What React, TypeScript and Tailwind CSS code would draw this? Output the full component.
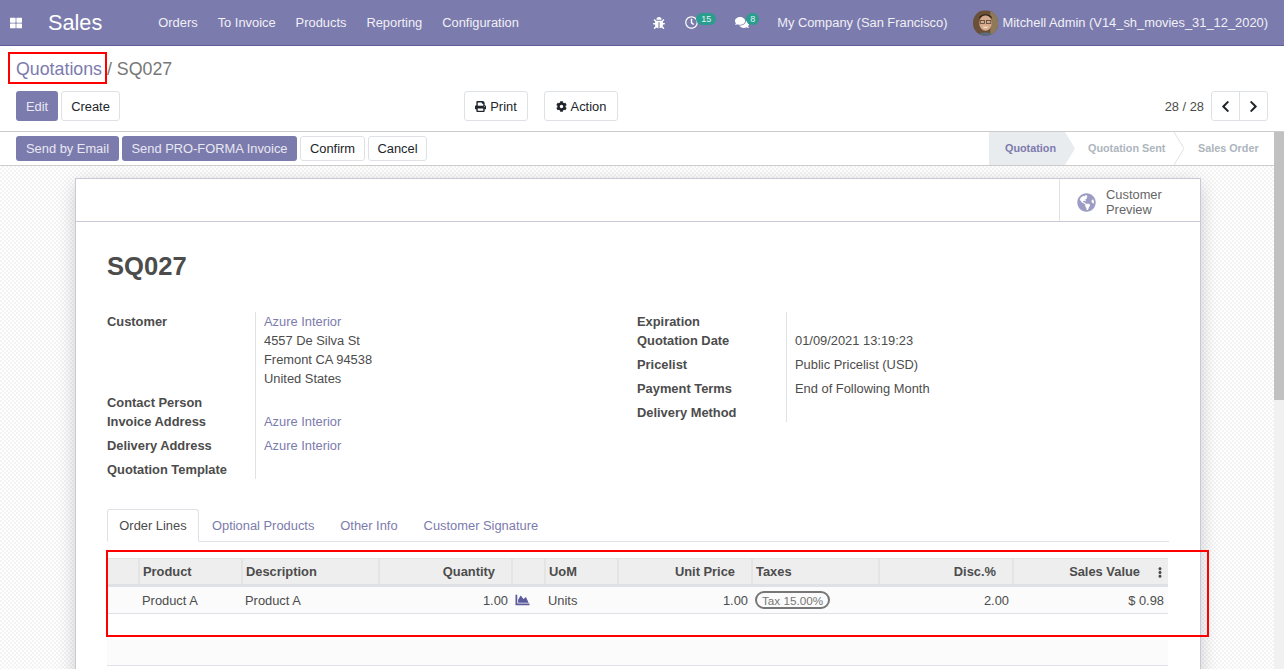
import { FaBug, FaChartArea, FaChevronLeft, FaChevronRight, FaCog, FaComments, FaEllipsisV, FaGlobeAmericas, FaPrint, FaRegClock, FaThLarge } from 'react-icons/fa';

const navLinks = ['Orders', 'To Invoice', 'Products', 'Reporting', 'Configuration'];

function Navbar() {
  return (
    <header className="h-[46px] shrink-0 flex items-center bg-[#7c7bad] border-b border-[#5f5e97] text-[#f0f0f6]">
      <FaThLarge className="ml-[10px] w-[12px] h-[12px] text-white" />
      <span className="ml-[26px] text-[21.7px] leading-none text-white">Sales</span>
      <nav className="ml-[56px] flex gap-[20px]">
        {navLinks.map((l) => (
          <span key={l}>{l}</span>
        ))}
      </nav>
      <div className="ml-auto flex items-center pr-[16px]">
        <FaBug className="w-[12px] h-[12px] text-white" />
        <span className="relative flex ml-[20px] w-[14px]">
          <FaRegClock className="w-[13px] h-[13px] text-white" />
          <span className="absolute left-[11px] -top-[3px] w-[20px] h-[12px] rounded-full bg-[#2a9d8f] text-[9px] leading-[12px] text-center text-[#e4f4f2]">15</span>
        </span>
        <span className="relative flex ml-[36px] w-[14px]">
          <FaComments className="w-[15px] h-[13px] text-white" />
          <span className="absolute left-[11px] -top-[3px] w-[13px] h-[12px] rounded-full bg-[#2a9d8f] text-[9px] leading-[12px] text-center text-[#e4f4f2]">8</span>
        </span>
        <span className="ml-[28px]">My Company (San Francisco)</span>
        <svg className="ml-[26px] w-[25px] h-[26px] rounded-full" viewBox="0 0 26 26">
          <rect width="26" height="26" fill="#6b5038" />
          <rect x="18" width="8" height="26" fill="#8f7a58" />
          <ellipse cx="13" cy="13" rx="6.5" ry="8" fill="#d8a98a" />
          <path d="M6 9 Q13 1 20 9 L19 6 Q13 2 7 6 Z" fill="#2e2119" />
          <rect x="7.5" y="10.5" width="4.5" height="3" fill="none" stroke="#4a4038" strokeWidth="0.8" />
          <rect x="14" y="10.5" width="4.5" height="3" fill="none" stroke="#4a4038" strokeWidth="0.8" />
          <path d="M9.5 17 Q13 20 16.5 17" fill="#f4e8dd" />
          <path d="M3 26 Q13 19 23 26 Z" fill="#5c6b7d" />
        </svg>
        <span className="ml-[4px]">Mitchell Admin (V14_sh_movies_31_12_2020)</span>
      </div>
    </header>
  );
}

function WhiteButton({ children, className }: { children: React.ReactNode; className: string }) {
  return (
    <span className={`flex items-center justify-center rounded-[3px] border border-[#dee2e6] bg-white text-[#212529] ${className}`}>
      {children}
    </span>
  );
}

function ControlPanel() {
  return (
    <section className="relative h-[86px] shrink-0 bg-white border-b border-[#ccc] px-[16px] pt-[11px]">
      <div className="text-[17.8px] leading-[24px] text-[#777]">
        <span className="text-[#7c7bad]">Quotations</span> / SQ027
      </div>
      <div className="mt-[10px] flex items-center">
        <div className="w-[448px] flex gap-[3px]">
          <span className="w-[42px] h-[30px] pt-px flex items-center justify-center rounded-[3px] bg-[#7c7bad] text-[#e8e8f2]">Edit</span>
          <WhiteButton className="w-[59px] h-[30px] pt-px">Create</WhiteButton>
        </div>
        <WhiteButton className="w-[64px] h-[30px] pt-px gap-[4px]">
          <FaPrint className="w-[11px] h-[11px]" /> Print
        </WhiteButton>
        <WhiteButton className="ml-[16px] w-[74px] h-[30px] pt-px gap-[4px]">
          <FaCog className="w-[11px] h-[11px]" /> Action
        </WhiteButton>
        <span className="ml-auto pt-px text-[#4c4c4c]">28 / 28</span>
        <div className="ml-[7px] flex h-[30px] w-[57px] rounded-[3px] border border-[#dee2e6] bg-white text-[#212529]">
          <span className="flex-1 flex items-center justify-center border-r border-[#dee2e6]">
            <FaChevronLeft className="w-[13px] h-[13px]" />
          </span>
          <span className="flex-1 flex items-center justify-center">
            <FaChevronRight className="w-[13px] h-[13px]" />
          </span>
        </div>
      </div>
    </section>
  );
}

function StatusBar() {
  return (
    <section className="relative h-[34px] shrink-0 bg-white border-b border-[#ccc] pl-[16px] pr-[10px] flex items-center gap-[3px]">
      <span className="w-[103px] h-[25px] flex items-center justify-center rounded-[3px] bg-[#7c7bad] text-[#e8e8f2]">Send by Email</span>
      <span className="w-[175px] h-[25px] flex items-center justify-center rounded-[3px] bg-[#7c7bad] text-[#e8e8f2]">Send PRO-FORMA Invoice</span>
      <WhiteButton className="w-[65px] h-[25px]">Confirm</WhiteButton>
      <WhiteButton className="w-[59px] h-[25px]">Cancel</WhiteButton>
      <div className="ml-auto flex h-full w-[285px] text-[10.8px] font-bold text-[#adb5bd]">
        <span className="relative w-[76px] bg-[#e9ecef] flex items-center pl-[16px] text-[#7c7bad]">
          Quotation
          <svg className="absolute left-full top-0 h-full w-[10px]" viewBox="0 0 10 33" preserveAspectRatio="none">
            <path d="M0 0 L10 16.5 L0 33 Z" fill="#e9ecef" />
          </svg>
        </span>
        <span className="relative w-[109px] flex items-center pl-[23px]">
          Quotation Sent
          <svg className="absolute right-[-10px] top-0 h-full w-[10px]" viewBox="0 0 10 33" preserveAspectRatio="none">
            <path d="M0 0 L10 16.5 L0 33" fill="none" stroke="#dee2e6" />
          </svg>
        </span>
        <span className="flex-1 flex items-center pl-[24px] whitespace-nowrap">Sales Order</span>
      </div>
    </section>
  );
}

function Field({ label, children, h, labelW = 'w-[148px]' }: { label: string; children?: React.ReactNode; h: string; labelW?: string }) {
  return (
    <div className={`flex ${h}`}>
      <div className={`${labelW} shrink-0 font-bold text-[#4c4c4c]`}>{label}</div>
      <div className="flex-1 border-l border-[#dee2e6] pl-[8px]">{children}</div>
    </div>
  );
}

function Link({ children }: { children: React.ReactNode }) {
  return <span className="text-[#7c7bad]">{children}</span>;
}

function FormGroups() {
  const rightW = 'w-[149px]';
  return (
    <div className="mt-[30px] flex leading-[19px] text-[#4c4c4c]">
      <div className="w-[530px]">
        <Field label="Customer" h="h-[81px]">
          <Link>Azure Interior</Link>
          <div>4557 De Silva St</div>
          <div>Fremont CA 94538</div>
          <div>United States</div>
        </Field>
        <Field label="Contact Person" h="h-[19px]" />
        <Field label="Invoice Address" h="h-[24px]">
          <Link>Azure Interior</Link>
        </Field>
        <Field label="Delivery Address" h="h-[24px]">
          <Link>Azure Interior</Link>
        </Field>
        <Field label="Quotation Template" h="h-[19px]" />
      </div>
      <div className="w-[531px]">
        <Field label="Expiration" h="h-[19px]" labelW={rightW} />
        <Field label="Quotation Date" h="h-[24px]" labelW={rightW}>01/09/2021 13:19:23</Field>
        <Field label="Pricelist" h="h-[24px]" labelW={rightW}>Public Pricelist (USD)</Field>
        <Field label="Payment Terms" h="h-[24px]" labelW={rightW}>End of Following Month</Field>
        <Field label="Delivery Method" h="h-[19px]" labelW={rightW} />
      </div>
    </div>
  );
}

function Tabs() {
  return (
    <div className="mt-[30px] h-[33px] flex border-b border-[#dee2e6] leading-[33px]">
      <span className="w-[92px] h-[33px] text-center rounded-t-[3px] border border-b-white border-[#dee2e6] bg-white leading-[31px] text-[#4c4c4c]">Order Lines</span>
      <span className="ml-[13px] text-[#7c7bad]">Optional Products</span>
      <span className="ml-[26px] text-[#7c7bad]">Other Info</span>
      <span className="ml-[26px] text-[#7c7bad]">Customer Signature</span>
    </div>
  );
}

function OrderTable() {
  const th = 'h-[27px] px-[3px] font-bold text-[#4c4c4c] border-l-2 border-[#e4e4e4]';
  const td = 'h-[28px] px-[3px] text-[#4c4c4c]';
  return (
    <table className="mt-[16px] w-[1061px] table-fixed border-collapse leading-[19px]">
      <colgroup>
        <col className="w-[32px]" />
        <col className="w-[103px]" />
        <col className="w-[137px]" />
        <col className="w-[133px]" />
        <col className="w-[33px]" />
        <col className="w-[73px]" />
        <col className="w-[134px]" />
        <col className="w-[127px]" />
        <col className="w-[134px]" />
        <col className="w-[155px]" />
      </colgroup>
      <thead className="bg-[#eee] border-t border-[#e4e4e4] border-b-[3px] border-b-[#dee2e6]">
        <tr>
          <th className="h-[27px]" />
          <th className={`${th} text-left`}>Product</th>
          <th className={`${th} text-left`}>Description</th>
          <th className={`${th} text-right pr-[16px]`}>Quantity</th>
          <th className={th} />
          <th className={`${th} text-left`}>UoM</th>
          <th className={`${th} text-right pr-[16px]`}>Unit Price</th>
          <th className={`${th} text-left`}>Taxes</th>
          <th className={`${th} text-right pr-[16px]`}>Disc.%</th>
          <th className={`${th} text-right pr-[28px] relative`}>
            Sales Value
            <FaEllipsisV className="absolute right-[3px] top-[8px] w-[10px] h-[11px] text-[#4c4c4c]" />
          </th>
        </tr>
      </thead>
      <tbody>
        <tr className="bg-[#fbfbfb] border-b border-[#dee2e6]">
          <td className={td} />
          <td className={`${td} whitespace-nowrap`}>Product A</td>
          <td className={td}>Product A</td>
          <td className={`${td} text-right pr-[4px]`}>1.00</td>
          <td className={td}>
            <FaChartArea className="w-[15px] h-[14px] text-[#5a5a9c]" />
          </td>
          <td className={td}>Units</td>
          <td className={`${td} text-right pr-[4px]`}>1.00</td>
          <td className={td}>
            <span className="inline-flex items-center h-[18px] px-[5px] rounded-full border-2 border-[#777] text-[11.7px] leading-none text-[#777]">Tax 15.00%</span>
          </td>
          <td className={`${td} text-right pr-[4px]`}>2.00</td>
          <td className={`${td} text-right pr-[4px]`}>$ 0.98</td>
        </tr>
        <tr className="h-[26px]"><td colSpan={10} /></tr>
        <tr className="h-[26px] bg-[#fbfbfb] border-b border-[#dee2e6]"><td colSpan={10} /></tr>
      </tbody>
    </table>
  );
}

export default function App() {
  return (
    <div className="relative h-[669px] overflow-hidden flex flex-col font-['Liberation_Sans',Arial,sans-serif] text-[12.88px]">
      <Navbar />
      <ControlPanel />
      <StatusBar />
      <div className="flex-1 min-h-0 flex">
        <main className="flex-1 min-w-0 pt-[12px] pl-[75px] overflow-hidden bg-[repeating-conic-gradient(#f4f4f4_0_25%,#fff_0_50%)] bg-[length:4px_4px]">
          <div className="w-[1126px] h-[600px] border border-[#c9c9d6] bg-white shadow-[0_5px_20px_-1px_rgba(0,0,0,0.2)]">
            <div className="h-[43px] flex justify-end border-b border-[#c9c9d6]">
              <div className="w-[141px] flex items-center pt-[4px] border-l border-[#dee2e6] text-[#666]">
                <FaGlobeAmericas className="ml-[17px] w-[19px] h-[19px] text-[#9d9cc4]" />
                <span className="ml-[10px] leading-[15px]">Customer<br />Preview</span>
              </div>
            </div>
            <div className="px-[31px]">
              <h1 className="mt-[28px] text-[25.6px] leading-[32px] font-bold text-[#4c4c4c]">SQ027</h1>
              <FormGroups />
              <Tabs />
              <OrderTable />
            </div>
          </div>
        </main>
        <div className="w-[10px] shrink-0 bg-[#f1f1f1]" />
      </div>
      {/* scrollbar thumb runs up past the status bar */}
      <div className="absolute right-0 top-[132px] w-[10px] h-[268px] bg-[#c1c1c1]" />
      {/* annotation boxes from the screenshot */}
      <div className="absolute left-[8px] top-[52px] w-[99px] h-[32px] border-2 border-[#f00]" />
      <div className="absolute left-[106px] top-[550px] w-[1103px] h-[87px] border-2 border-[#f00]" />
    </div>
  );
}
